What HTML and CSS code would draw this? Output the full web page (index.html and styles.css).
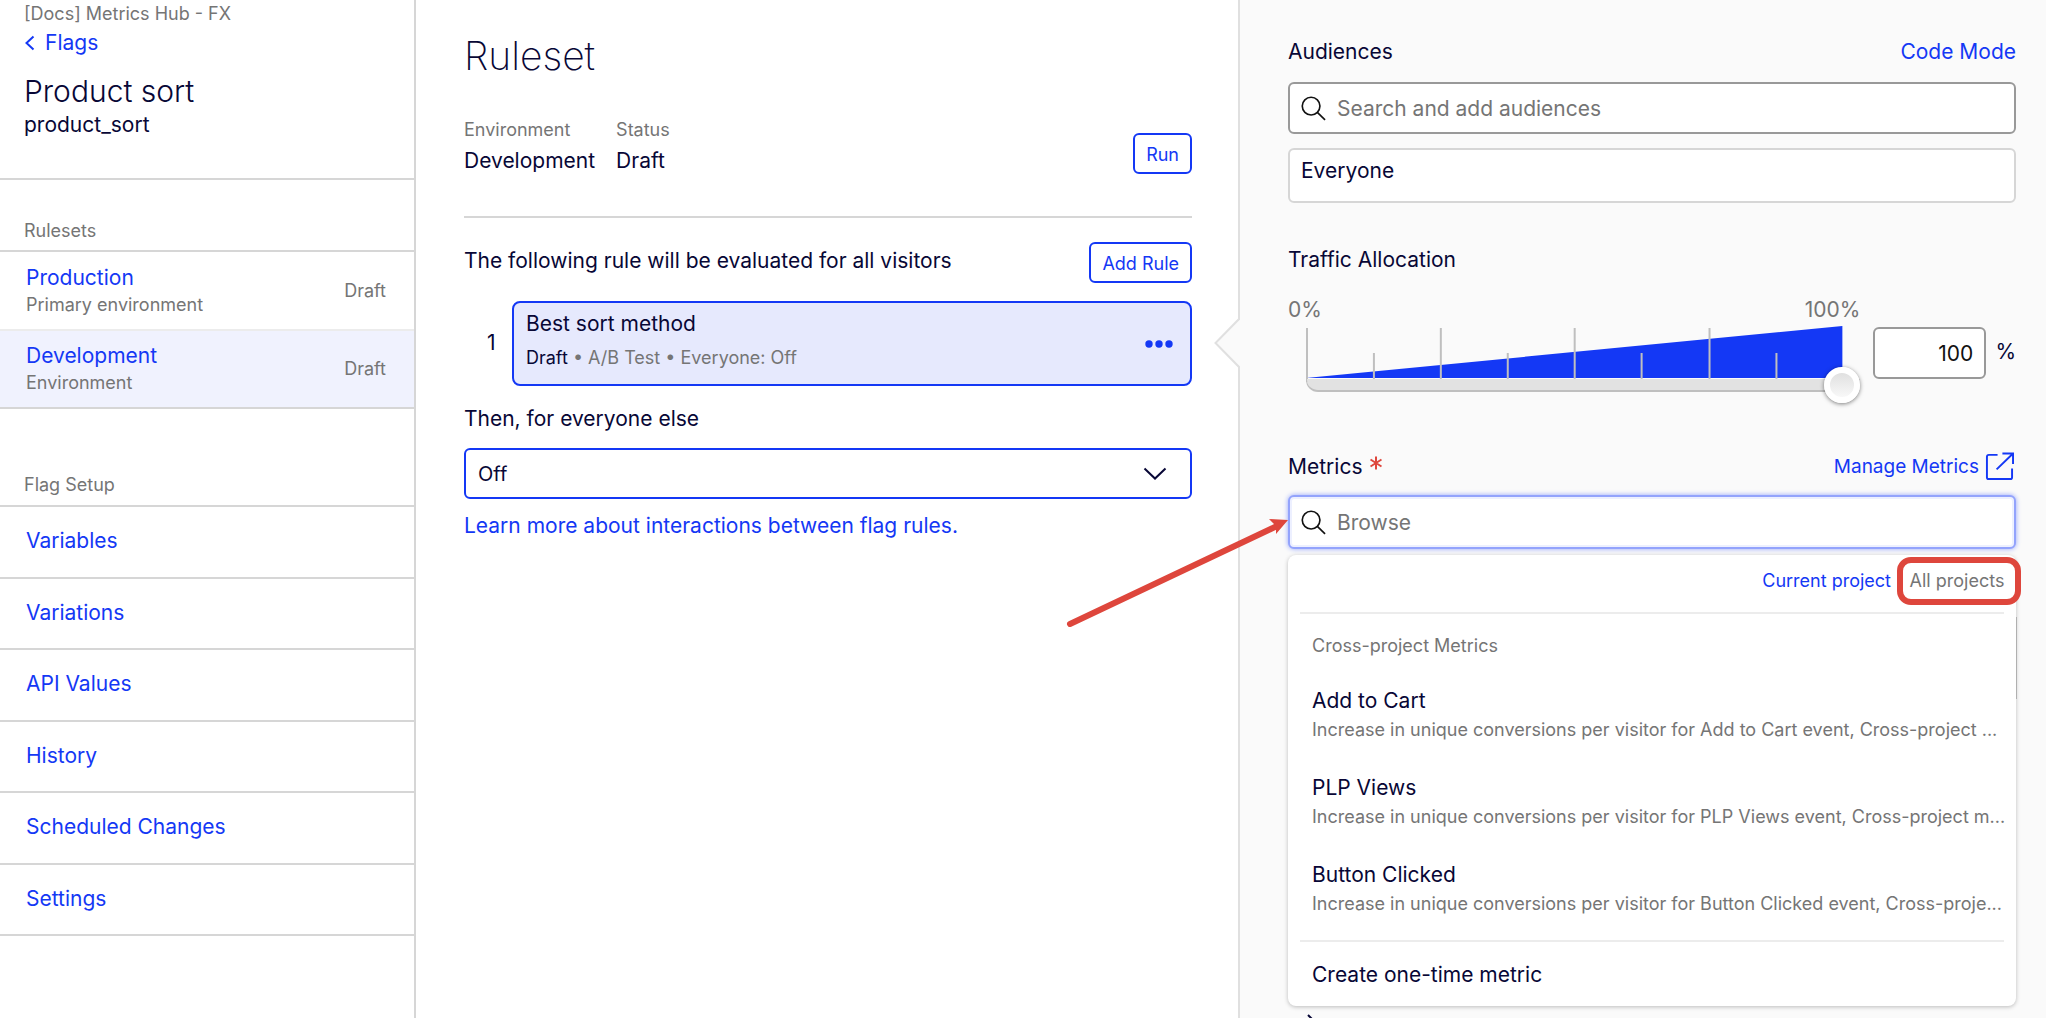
FILE: index.html
```html
<!DOCTYPE html>
<html lang="en">
<head>
    <meta charset="UTF-8">
    <meta name="viewport" content="width=device-width, initial-scale=1.0">
    <title>Product sort - Ruleset</title>
    <link rel="stylesheet" href="styles.css">
</head>
<body>
    <nav class="sidebar">
        <div class="flag-header">
            <div class="project-name">[Docs] Metrics Hub - FX</div>
            <a class="back-link" href="#">
                <svg class="back-icon" viewBox="0 0 12 16"><path d="M9.500 1.500L2.500 8l7 6.500"/></svg>
                Flags
            </a>
            <h1 class="flag-name">Product sort</h1>
            <div class="flag-key">product_sort</div>
        </div>

        <h2 class="nav-title">Rulesets</h2>
        <ul class="env-list">
            <li class="env-item">
                <div>
                    <a class="env-link" href="#">Production</a>
                    <div class="env-note">Primary environment</div>
                </div>
                <span class="env-status">Draft</span>
            </li>
            <li class="env-item active">
                <div>
                    <a class="env-link" href="#">Development</a>
                    <div class="env-note">Environment</div>
                </div>
                <span class="env-status">Draft</span>
            </li>
        </ul>

        <h2 class="nav-title">Flag Setup</h2>
        <ul class="setup-list">
            <li><a href="#">Variables</a></li>
            <li><a href="#">Variations</a></li>
            <li><a href="#">API Values</a></li>
            <li><a href="#">History</a></li>
            <li><a href="#">Scheduled Changes</a></li>
            <li><a href="#">Settings</a></li>
        </ul>
    </nav>

    <main class="ruleset">
        <h1 class="page-title">Ruleset</h1>
        <div class="ruleset-info">
            <dl class="facts">
                <div>
                    <dt>Environment</dt>
                    <dd>Development</dd>
                </div>
                <div>
                    <dt>Status</dt>
                    <dd>Draft</dd>
                </div>
            </dl>
            <button class="button run-button" type="button">Run</button>
        </div>

        <div class="rules-header">
            <span class="rules-text">The following rule will be evaluated for all visitors</span>
            <button class="button" type="button">Add Rule</button>
        </div>
        <div class="rule-row">
            <span class="rule-number">1</span>
            <div class="rule-card">
                <div class="rule-text">
                    <div class="rule-name">Best sort method</div>
                    <div class="rule-meta"><span class="rule-status">Draft</span> • A/B Test • Everyone: Off</div>
                </div>
                <button class="more-button" type="button" aria-label="More">
                    <svg viewBox="0 0 28 8"><circle cx="4" cy="4" r="3.700"/><circle cx="14" cy="4" r="3.700"/><circle cx="24" cy="4" r="3.700"/></svg>
                </button>
            </div>
            <!-- pointer from the side panel to the selected rule -->
            <svg class="notch" viewBox="0 0 26 50"><path class="notch-fill" d="M26 1L2 25l24 24z"/><path class="notch-line" d="M25 0v1L1.500 25 25 49v1"/></svg>
        </div>

        <label class="else-label" for="else-variation">Then, for everyone else</label>
        <div class="select-wrap">
            <select class="else-select" id="else-variation">
                <option>Off</option>
                <option>On</option>
            </select>
            <svg class="select-arrow" viewBox="0 0 24 14"><path d="M1.500 1.500L12 11.500l10.500-10"/></svg>
        </div>
        <a class="learn-link" href="#">Learn more about interactions between flag rules.</a>
    </main>

    <aside class="panel">
        <div class="field-header">
            <label for="audience-search">Audiences</label>
            <a href="#">Code Mode</a>
        </div>
        <div class="search-box">
            <svg class="search-icon" viewBox="0 0 26 26"><circle cx="10.500" cy="10.500" r="9.200"/><path d="M17 17l8 7.800"/></svg>
            <input class="search-input" id="audience-search" type="text" placeholder="Search and add audiences">
        </div>
        <div class="audience-box">Everyone</div>

        <label class="traffic-label" for="traffic-range">Traffic Allocation</label>
        <div class="traffic">
            <div class="traffic-slider">
                <div class="traffic-ends"><span>0%</span><span>100%</span></div>
                <div class="traffic-scale">
                    <svg class="wedge" viewBox="0 0 538 56" preserveAspectRatio="none">
                        <path class="wedge-fill" d="M0 52L537 0v52z"/>
                        <path class="wedge-ticks" d="M1 2v54M135 2v54M269 2v54M404 2v54M68 27v29M202 27v29M336 27v29M471 27v29"/>
                    </svg>
                    <input class="traffic-range" id="traffic-range" type="range" min="0" max="100" value="100">
                </div>
            </div>
            <input class="traffic-value" type="text" value="100" aria-label="Traffic percentage">
            <span class="traffic-unit">%</span>
        </div>

        <div class="field-header metrics-header">
            <label for="metric-search">Metrics <svg class="required" viewBox="0 0 12 14"><path d="M6 .500v13M.500 3.500l11 7M11.500 3.500l-11 7"/></svg></label>
            <a class="manage-link" href="#">
                Manage Metrics
                <svg class="external-icon" viewBox="0 0 30 30"><path d="M13 3H4Q2 3 2 5v21q0 2 2 2h22q2 0 2-2v-9"/><path d="M12 18L29 1.500M18 1.500h11v11"/></svg>
            </a>
        </div>
        <div class="metrics-field">
            <div class="search-box focused">
                <svg class="search-icon" viewBox="0 0 26 26"><circle cx="10.500" cy="10.500" r="9.200"/><path d="M17 17l8 7.800"/></svg>
                <input class="search-input" id="metric-search" type="text" placeholder="Browse">
            </div>
            <div class="dropdown">
                <div class="dropdown-tabs">
                    <button class="tab" type="button">Current project</button>
                    <button class="tab selected" type="button">All projects</button>
                </div>
                <div class="dropdown-title">Cross-project Metrics</div>
                <ul class="metric-list">
                    <li>
                        <div class="metric-name">Add to Cart</div>
                        <div class="metric-desc">Increase in unique conversions per visitor for Add to Cart event, Cross-project ...</div>
                    </li>
                    <li>
                        <div class="metric-name">PLP Views</div>
                        <div class="metric-desc">Increase in unique conversions per visitor for PLP Views event, Cross-project m...</div>
                    </li>
                    <li>
                        <div class="metric-name">Button Clicked</div>
                        <div class="metric-desc">Increase in unique conversions per visitor for Button Clicked event, Cross-proje...</div>
                    </li>
                </ul>
                <button class="create-metric" type="button">Create one-time metric</button>
            </div>
            <svg class="arrow" viewBox="0 0 224 114"><path class="arrow-line" d="M5 109L212 11"/><path class="arrow-head" d="M223 5l-19-1 7 7 0 8z"/></svg>
        </div>
        <div class="metrics-selected"></div>
        <svg class="section-toggle" viewBox="0 0 12 20"><path d="M1 1l9 9-9 9"/></svg>
    </aside>
</body>
</html>
```
FILE: styles.css
```css
* {
    box-sizing: border-box;
}
body {
    margin: 0;
    height: 100vh;
    overflow: hidden;
    display: grid;
    grid-template-columns: 416px minmax(0, 1fr) 808px;
    font-family: Inter, "Liberation Sans", sans-serif;
    font-size: 21px;
    line-height: 28px;
    color: #080736;
    background-color: #fff;
}
a {
    color: #1438f5;
    text-decoration: none;
}
h1, h2, ul, dl, dd {
    margin: 0;
    padding: 0;
    font-weight: inherit;
}
ul {
    list-style: none;
}
button, input, select {
    font-family: inherit;
    font-size: inherit;
    color: inherit;
}
svg {
    fill: none;
    display: block;
}

/* Sidebar */
.sidebar {
    border-right: 2px solid #d6d6d6;
}
.flag-header {
    height: 180px;
    padding-left: 24px;
    border-bottom: 2px solid #d6d6d6;
}
.project-name {
    font-size: 18px;
}
.project-name, .nav-title, .env-note, .env-status, dt {
    color: #757575;
}
.back-link {
    display: flex;
    align-items: center;
    gap: 9px;
    line-height: 30px;
}
.back-icon {
    width: 12px;
    height: 16px;
    stroke: #1438f5;
    stroke-width: 2;
}
.flag-name {
    font-size: 30px;
    font-weight: 350;
    line-height: 36px;
    margin: 15px 0 2px;
}
.nav-title {
    font-size: 18px;
    height: 72px;
    padding: 37px 24px 0;
    border-bottom: 2px solid #d6d6d6;
}
.env-list {
    padding-top: 1px;
}
.env-list + .nav-title {
    height: 98px;
    padding-top: 62px;
}
.env-item {
    height: 78px;
    padding: 0 28px 0 26px;
    display: flex;
    justify-content: space-between;
    align-items: center;
    border-bottom: 2px solid #ececec;
}
.env-item.active {
    background-color: #f0f2fe;
    border-bottom-color: #d6d6d6;
}
.env-link {
    display: block;
}
.env-note, .env-status {
    font-size: 18px;
}
.env-note {
    line-height: 26px;
}
.setup-list {
    height: 429px;
    display: grid;
    grid-auto-rows: 1fr;
}
.setup-list li {
    padding-left: 26px;
    line-height: 68px;
    border-bottom: 2px solid #d6d6d6;
}

/* Ruleset */
.ruleset {
    padding: 32px 46px 0 48px;
}
.page-title {
    font-size: 39px;
    font-weight: 200;
    line-height: 48px;
}
.ruleset-info {
    display: flex;
    justify-content: space-between;
    align-items: center;
    padding: 36px 0 38px;
    border-bottom: 2px solid #d6d6d6;
}
.facts {
    display: flex;
    gap: 21px;
}
dt {
    font-size: 18px;
}
dd {
    line-height: 34px;
}
.button {
    height: 41px;
    padding: 2px 11px 0;
    font-size: 18px;
    color: #1438f5;
    background-color: #fff;
    border: 2px solid #1438f5;
    border-radius: 6px;
}
.run-button {
    margin-top: 12px;
}
.rules-header {
    display: flex;
    justify-content: space-between;
    align-items: center;
    padding: 24px 0 18px;
}
.rules-text {
    padding-bottom: 4px;
}
.rule-row {
    position: relative;
    display: flex;
    align-items: center;
    justify-content: space-between;
}
.rule-number {
    width: 48px;
    padding: 0 0 2px 23px;
}
.rule-card {
    flex: 1;
    height: 85px;
    padding: 0 14px 0 12px;
    display: flex;
    justify-content: space-between;
    align-items: center;
    background-color: #e6e9fd;
    border: 2px solid #1438f5;
    border-radius: 8px;
}
.rule-text {
    padding-bottom: 3px;
}
.rule-name {
    line-height: 32px;
}
.rule-meta {
    font-size: 18px;
    line-height: 36px;
    color: #757575;
}
.rule-status {
    color: #080736;
}
.more-button {
    padding: 3px;
    border: 0;
    background: none;
}
.more-button svg {
    width: 28px;
    height: 8px;
    fill: #1438f5;
}
.notch {
    position: absolute;
    right: -48px;
    top: 17px;
    width: 26px;
    height: 50px;
    z-index: 1;
}
.notch-fill {
    fill: #fafafa;
}
.notch-line {
    stroke: #e0e0e0;
    stroke-width: 2;
}
.else-label {
    display: block;
    padding: 19px 0 15px;
}
.select-wrap {
    position: relative;
}
.else-select {
    appearance: none;
    display: block;
    width: 100%;
    height: 51px;
    padding: 0 12px;
    font-size: 20px;
    background-color: #fff;
    border: 2px solid #1438f5;
    border-radius: 6px;
}
.select-arrow {
    position: absolute;
    right: 25px;
    top: 19px;
    width: 24px;
    height: 14px;
    stroke: #080736;
    stroke-width: 2;
}
.learn-link {
    display: block;
    margin-top: 13px;
}

/* Side panel */
.panel {
    padding: 38px 30px 0 48px;
    background-color: #fafafa;
    border-left: 2px solid #e0e0e0;
}
.field-header {
    display: flex;
    justify-content: space-between;
    align-items: center;
    margin-bottom: 16px;
}
.search-box {
    height: 52px;
    display: flex;
    align-items: center;
    gap: 11px;
    padding: 0 11px;
    background-color: #fff;
    border: 2px solid #999;
    border-radius: 6px;
}
.search-icon {
    width: 25px;
    height: 25px;
    stroke: #111;
    stroke-width: 1.7;
}
.search-input {
    flex: 1;
    padding: 0;
    border: 0;
    outline: 0;
    background: none;
}
.search-input::placeholder {
    color: #757575;
}
.audience-box {
    height: 55px;
    margin-top: 14px;
    padding: 7px 11px;
    background-color: #fff;
    border: 2px solid #d6d6d6;
    border-radius: 6px;
}
.traffic-label {
    display: block;
    margin-top: 43px;
}
.traffic {
    display: flex;
    align-items: flex-end;
    gap: 13px;
    margin-top: 22px;
    height: 83px;
}
.traffic-slider {
    flex: 1;
    height: 83px;
}
.traffic-ends {
    display: flex;
    justify-content: space-between;
    color: #757575;
}
.traffic-scale {
    position: relative;
    margin: 2px 0 0 18px;
}
.wedge {
    width: calc(100% - 17px);
    height: 56px;
    position: absolute;
    left: 0;
    top: 0;
    pointer-events: none;
}
.wedge-fill {
    fill: #1438f5;
}
.wedge-ticks {
    stroke: #bfbfbf;
    stroke-width: 2;
}
.traffic-range {
    appearance: none;
    position: relative;
    display: block;
    width: 100%;
    height: 36px;
    margin: 0;
    padding: 0;
    top: 41px;
    background: none;
}
.traffic-range::-webkit-slider-runnable-track {
    height: 13px;
    background: linear-gradient(#e2e2e2, #e2e2e2) padding-box;
    border: solid #bfbfbf;
    border-width: 0 0 2px 1px;
    border-radius: 0 0 12px 12px;
}
.traffic-range::-webkit-slider-thumb {
    appearance: none;
    width: 36px;
    height: 36px;
    margin-top: -12px;
    border: 6px solid #fff;
    border-radius: 50%;
    background: linear-gradient(#e0e0e0, #f8f8f8);
    box-shadow: 0 1px 4px rgba(0, 0, 0, 0.5);
}
.traffic-value {
    width: 113px;
    height: 52px;
    padding: 0 11px;
    text-align: right;
    color: #111;
    background-color: #fff;
    border: 2px solid #999;
    border-radius: 6px;
}
.traffic-unit {
    margin: 0 0 13px -4px;
}
.metrics-header {
    margin: 73px 0 14px;
}
.metrics-header label, .manage-link {
    display: flex;
    align-items: center;
    gap: 6px;
}
.required {
    width: 12px;
    height: 14px;
    margin: 0 0 8px 2px;
    stroke: #de463c;
    stroke-width: 2;
}
.manage-link {
    font-size: 19px;
}
.external-icon {
    width: 29px;
    height: 29px;
    margin-right: 2px;
    stroke: #1438f5;
    stroke-width: 2;
}
.metrics-field {
    position: relative;
}
.search-box.focused {
    height: 54px;
    border-color: #93a3fc;
    box-shadow: 0 0 5px #93a3fc, inset 0 0 0 2px #edf0ff;
}
.dropdown {
    position: absolute;
    top: 60px;
    left: 0;
    right: 0;
    padding: 0 12px;
    background-color: #fff;
    border-radius: 8px;
    box-shadow: 0 1px 4px rgba(0, 0, 0, 0.25);
}
.dropdown-tabs {
    display: flex;
    justify-content: flex-end;
    gap: 6px;
    height: 59px;
    margin-right: -17px;
    padding-top: 2px;
    position: relative;
}
.dropdown-tabs::after {
    content: "";
    position: absolute;
    left: 0;
    right: 17px;
    bottom: 0;
    border-bottom: 2px solid #ececec;
}
.tab {
    height: 48px;
    padding: 0 0 2px;
    font-size: 18px;
    color: #1438f5;
    background: none;
    border: 0;
}
.tab.selected {
    width: 124px;
    padding-right: 4px;
    color: #757575;
    border: 6px solid #de463c;
    border-radius: 14px;
}
.dropdown-title {
    padding: 18px 12px 0;
    font-size: 18px;
    color: #757575;
}
.metric-list {
    padding: 26px 0 22px 12px;
    display: flex;
    flex-direction: column;
    gap: 29px;
    border-bottom: 2px solid #ececec;
}
.metric-name {
    line-height: 30px;
}
.metric-desc {
    font-size: 18px;
    color: #757575;
    white-space: nowrap;
}
.create-metric {
    display: block;
    height: 64px;
    padding: 0 12px;
    background: none;
    border: 0;
}
/* Content under the open dropdown */
.metrics-selected {
    height: 82px;
    margin: 68px -1px 0 0;
    border-right: 1px solid #c4c4c4;
}
.section-toggle {
    width: 12px;
    height: 20px;
    margin: 315px 0 0 19px;
    stroke: #080736;
    stroke-width: 2;
}

/* Callout arrow */
.arrow {
    position: absolute;
    left: -223px;
    top: 20px;
    width: 224px;
    height: 114px;
}
.arrow-line {
    stroke: #de463c;
    stroke-width: 6;
    stroke-linecap: round;
}
.arrow-head {
    fill: #de463c;
}
```
